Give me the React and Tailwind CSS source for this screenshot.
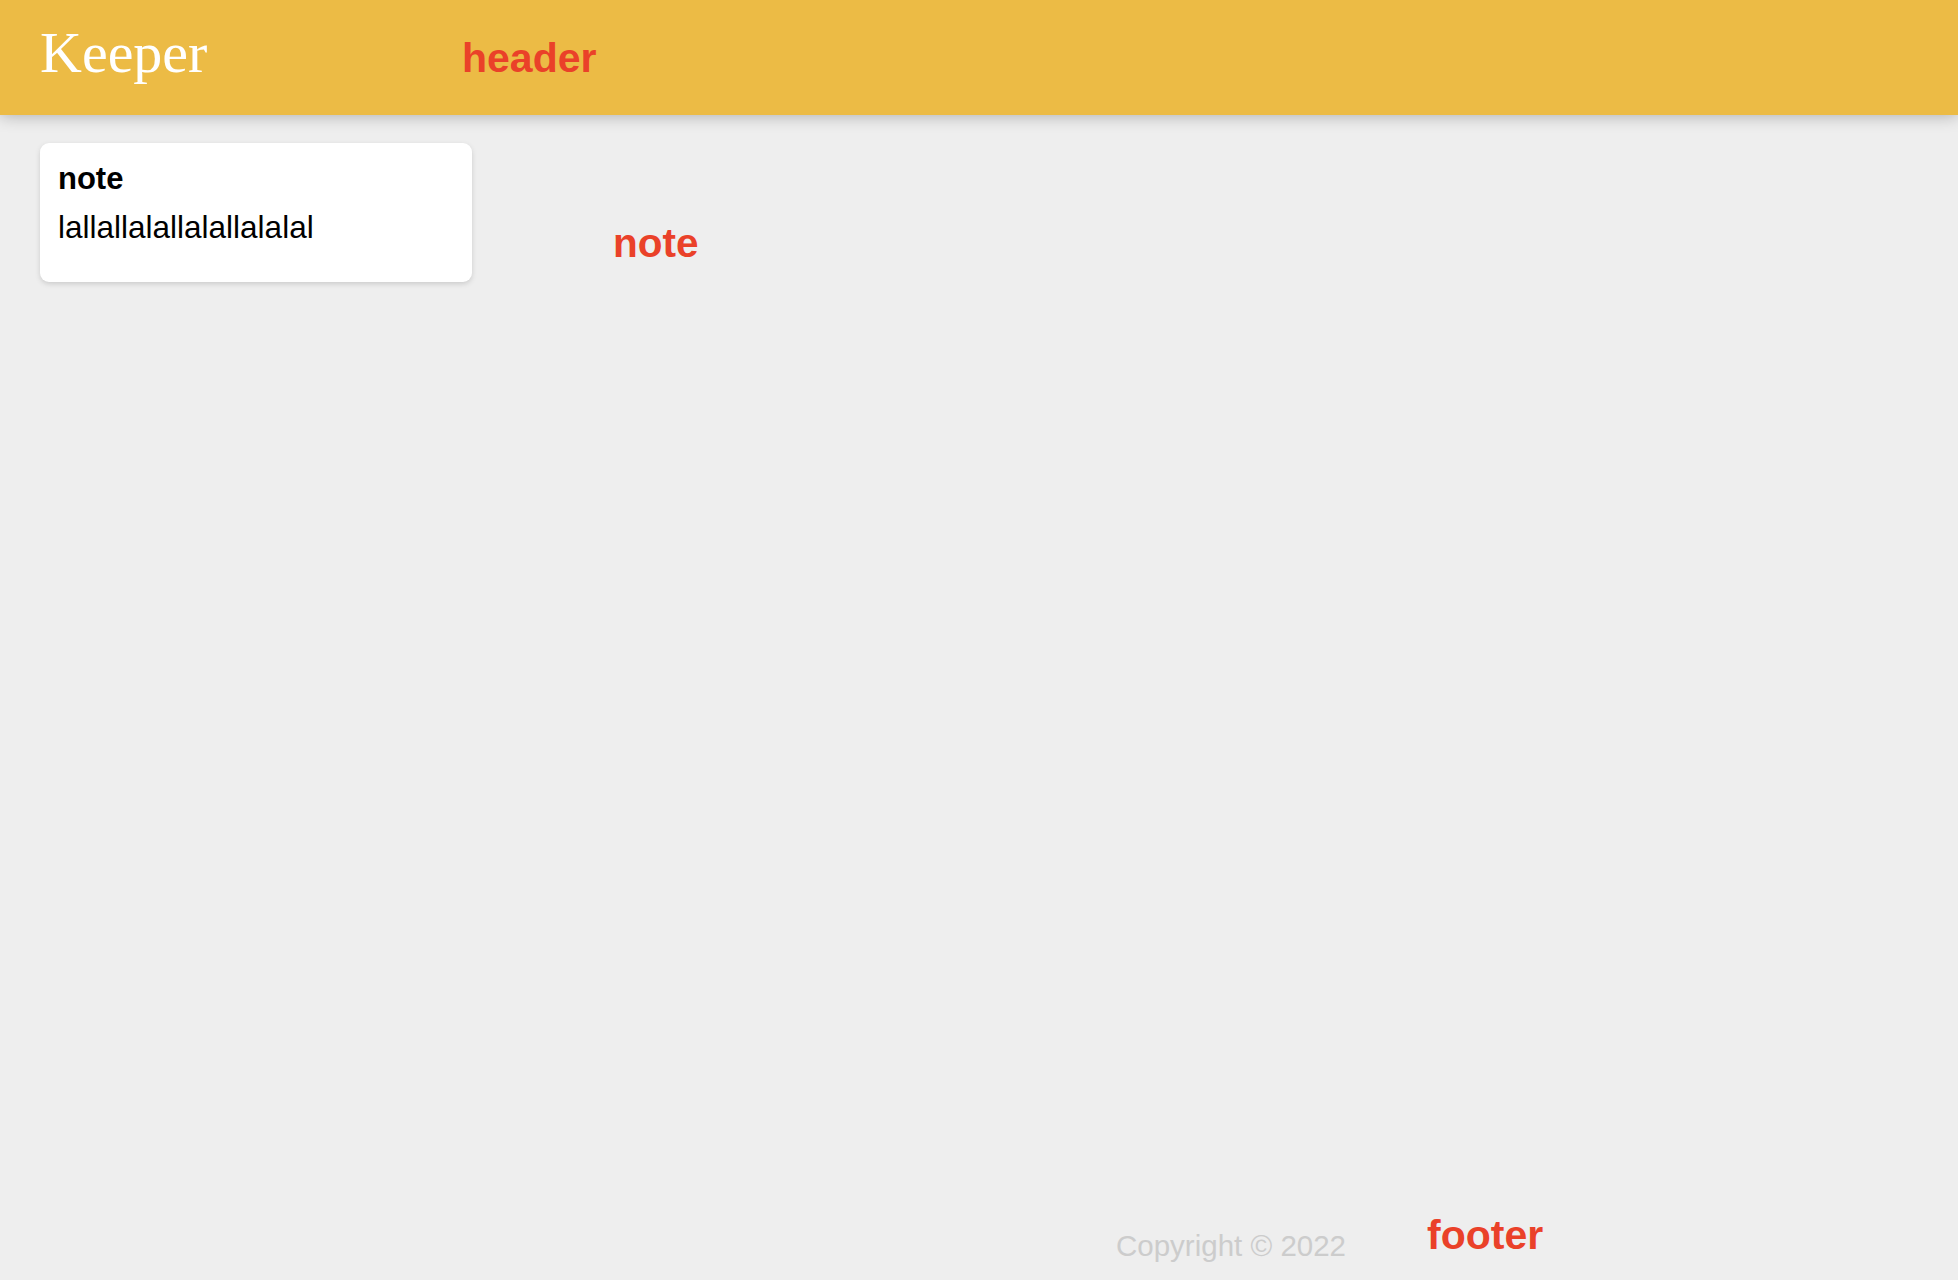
export default function App() {
  return (
    <div className="min-h-[1280px] bg-[#eeeeee] flex flex-col font-['Liberation_Sans',Arial,sans-serif]">
      <header className="relative z-10 h-[115px] bg-[#ecbb45] shadow-[0_0_16px_0_rgba(0,0,0,0.3)] pl-[40px] pt-[21px] flex items-baseline">
        <h1 className="w-[422px] text-[58px] leading-[64px] text-white font-normal font-['Liberation_Serif','Times_New_Roman',serif]">
          Keeper
        </h1>
        <span className="text-[41px] leading-[46px] font-bold text-[#ea4129]">header</span>
      </header>

      <main className="flex items-start pl-[40px] pt-[28px]">
        <div className="w-[432px] rounded-[9px] bg-white shadow-[0_2px_5px_#cccccc] pt-[18px] pb-[19px] px-[18px]">
          <h2 className="text-[31px] leading-[36px] font-bold text-black mb-[12px]">note</h2>
          <p className="text-[31.5px] leading-[36px] text-black mb-[18px]">lallallalallalallalalal</p>
        </div>
        <span className="ml-[141px] mt-[77px] text-[40.5px] leading-[46px] font-bold text-[#ea4129]">note</span>
      </main>

      <footer className="mt-auto h-[68px] flex items-start pl-[1116px]">
        <p className="w-[311px] mt-[17px] text-[29.5px] leading-[33px] text-[#cccccc]">Copyright © 2022</p>
        <span className="text-[41px] leading-[46px] font-bold text-[#ea4129]">footer</span>
      </footer>
    </div>
  );
}
